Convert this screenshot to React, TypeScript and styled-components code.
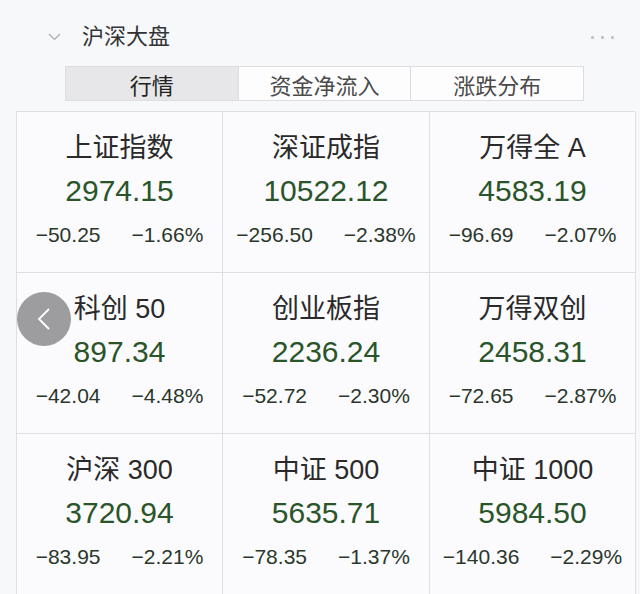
import React from "react";
import styled, { createGlobalStyle } from "styled-components";

const GlobalStyle = createGlobalStyle`
  body {
    margin: 0;
    background: #f7f8fa;
    font-family: "Liberation Sans", "Noto Sans CJK SC", sans-serif;
  }
`;

const Page = styled.div`
  position: relative;
  width: 640px;
  height: 594px;
  overflow: hidden;
  background: #f7f8fa;
`;

const Header = styled.div`
  display: flex;
  align-items: center;
  height: 24px;
  margin-top: 25px;
  padding-left: 48px;
  padding-right: 26px;
`;

const Title = styled.div`
  margin-left: 21px;
  font-size: 22px;
  line-height: 24px;
  color: #333;
  flex: 1;
`;

const Dots = styled.div`
  display: flex;
  gap: 7px;
  span {
    width: 3px;
    height: 3px;
    border-radius: 1px;
    background: #c2c3c8;
  }
`;

const Tabs = styled.div`
  display: flex;
  margin: 17px 0 0 65px;
  width: 519px;
  height: 35px;
  border: 1px solid #dcdde0;
  box-sizing: border-box;
`;

const Tab = styled.div<{ $active?: boolean }>`
  flex: 1;
  display: flex;
  align-items: center;
  justify-content: center;
  font-size: 22px;
  color: ${(p) => (p.$active ? "#222" : "#4a4a4a")};
  background: ${(p) => (p.$active ? "#e7e7e9" : "#fdfdfe")};
  & + & {
    border-left: 1px solid #dcdde0;
  }
`;

const Grid = styled.div`
  display: grid;
  grid-template-columns: 206px 207px 206px;
  grid-auto-rows: 161px;
  margin: 10px 0 0 16px;
  width: 619px;
  border-top: 1px solid #dedfe2;
  border-left: 1px solid #dedfe2;
  box-sizing: border-box;
`;

const Cell = styled.div`
  display: flex;
  flex-direction: column;
  align-items: center;
  padding-top: 21px;
  background: #fbfbfd;
  border-right: 1px solid #dedfe2;
  border-bottom: 1px solid #dedfe2;
`;

const Name = styled.div`
  font-size: 27px;
  line-height: 30px;
  color: #2a2a2a;
  white-space: nowrap;
`;

const Value = styled.div`
  margin-top: 10px;
  font-size: 30px;
  line-height: 36px;
  color: #2a552a;
`;

const Change = styled.div`
  display: flex;
  gap: 31px;
  margin-top: 14px;
  font-size: 21px;
  line-height: 24px;
  color: #2a372a;
  white-space: nowrap;
`;

const BackButton = styled.div`
  position: absolute;
  left: 17px;
  top: 292px;
  width: 54px;
  height: 54px;
  border-radius: 50%;
  background: rgba(140, 140, 142, 0.85);
  display: flex;
  align-items: center;
  justify-content: center;
`;

const indices = [
  { name: "上证指数", value: "2974.15", diff: "−50.25", pct: "−1.66%" },
  { name: "深证成指", value: "10522.12", diff: "−256.50", pct: "−2.38%" },
  { name: "万得全 A", value: "4583.19", diff: "−96.69", pct: "−2.07%" },
  { name: "科创 50", value: "897.34", diff: "−42.04", pct: "−4.48%" },
  { name: "创业板指", value: "2236.24", diff: "−52.72", pct: "−2.30%" },
  { name: "万得双创", value: "2458.31", diff: "−72.65", pct: "−2.87%" },
  { name: "沪深 300", value: "3720.94", diff: "−83.95", pct: "−2.21%" },
  { name: "中证 500", value: "5635.71", diff: "−78.35", pct: "−1.37%" },
  { name: "中证 1000", value: "5984.50", diff: "−140.36", pct: "−2.29%" },
];

const App = () => {
  return (
    <Page>
      <GlobalStyle />
      <Header>
        <svg width="13" height="8" viewBox="0 0 13 8">
          <path d="M1 1 L6.5 6.5 L12 1" fill="none" stroke="#a9aab0" strokeWidth="1.2" />
        </svg>
        <Title>沪深大盘</Title>
        <Dots>
          <span />
          <span />
          <span />
        </Dots>
      </Header>
      <Tabs>
        <Tab $active>行情</Tab>
        <Tab>资金净流入</Tab>
        <Tab>涨跌分布</Tab>
      </Tabs>
      <Grid>
        {indices.map((item) => (
          <Cell key={item.name}>
            <Name>{item.name}</Name>
            <Value>{item.value}</Value>
            <Change>
              <span>{item.diff}</span>
              <span>{item.pct}</span>
            </Change>
          </Cell>
        ))}
      </Grid>
      <BackButton>
        <svg width="14" height="24" viewBox="0 0 14 24">
          <path d="M12 2 L2 12 L12 22" fill="none" stroke="#fff" strokeWidth="1.8" />
        </svg>
      </BackButton>
    </Page>
  );
};

export default App;
